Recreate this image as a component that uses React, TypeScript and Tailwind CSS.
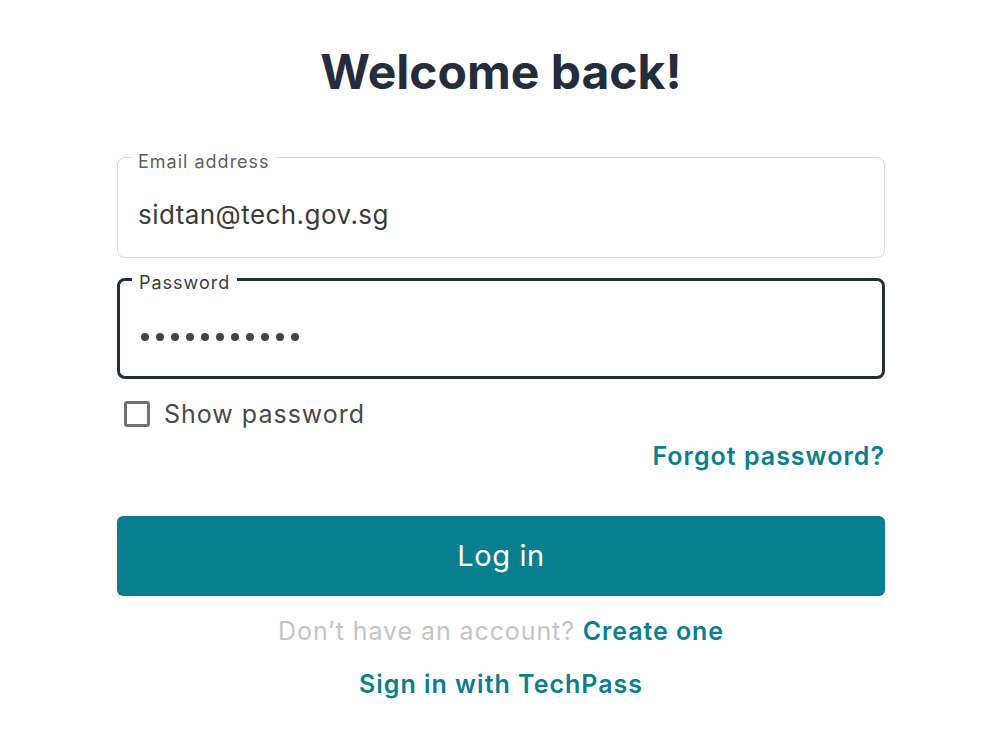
import React from 'react';

/**
 * Login form
 */
export default function App() {
  const dots = Array.from({ length: 11 });

  return (
    <div className="min-h-screen bg-white flex justify-center" style={{ fontFamily: 'Inter, "Noto Sans", sans-serif' }}>
      <div className="w-[768px] pt-[40px] flex flex-col">
        <h1 className="text-[48px] leading-[64px] font-bold text-[#252c3a] text-center">
          Welcome back!
        </h1>

        {/* Email field */}
        <div className="relative mt-[53px] h-[101px] border border-[#d9d9d9] rounded-[8px] px-[20px]">
          <span className="absolute -top-[7px] left-[14px] bg-white px-[6px] text-[18px] leading-[22px] tracking-[1px] text-[#5f5f5f]">
            Email address
          </span>
          <div className="pt-[40px] text-[26px] leading-[34px] tracking-[0.45px] text-[#3b3b3b]">sidtan@tech.gov.sg</div>
        </div>

        {/* Password field */}
        <div className="relative mt-[20px] h-[101px] border-[3px] border-[#252c3a] rounded-[8px] px-[18px]">
          <span className="absolute -top-[9px] left-[12px] bg-white px-[7px] text-[18px] leading-[22px] tracking-[1px] text-[#3b3b3b]">
            Password
          </span>
          <div className="pt-[52px] flex gap-[7px] pl-[3px]">
            {dots.map((_, i) => (
              <span key={i} className="w-[8px] h-[8px] rounded-full bg-[#444444]" />
            ))}
          </div>
        </div>

        <label className="mt-[19px] h-[32px] flex items-center gap-[14px] pl-[7px]">
          <span className="w-[26px] h-[26px] border-[3px] border-[#707070] rounded-[3px]" />
          <span className="text-[25px] leading-[32px] tracking-[1px] text-[#4a4a4a]">Show password</span>
        </label>

        <div className="mt-[10px] flex justify-end">
          <a className="text-[25px] leading-[32px] tracking-[1px] font-semibold text-[#0b7f8f]">Forgot password?</a>
        </div>

        <button className="mt-[44px] h-[80px] w-full rounded-[6px] bg-[#087f8f] text-white text-[29px] tracking-[0.6px]">
          Log in
        </button>

        <p className="mt-[19px] text-center text-[25px] leading-[32px] tracking-[0.9px] text-[#c4c4c4]">
          Don’t have an account? <span className="font-semibold text-[#0b7f8f]">Create one</span>
        </p>

        <p className="mt-[21px] text-center text-[25px] leading-[32px] tracking-[1px] font-semibold text-[#0b7f8f]">
          Sign in with TechPass
        </p>
      </div>
    </div>
  );
}
